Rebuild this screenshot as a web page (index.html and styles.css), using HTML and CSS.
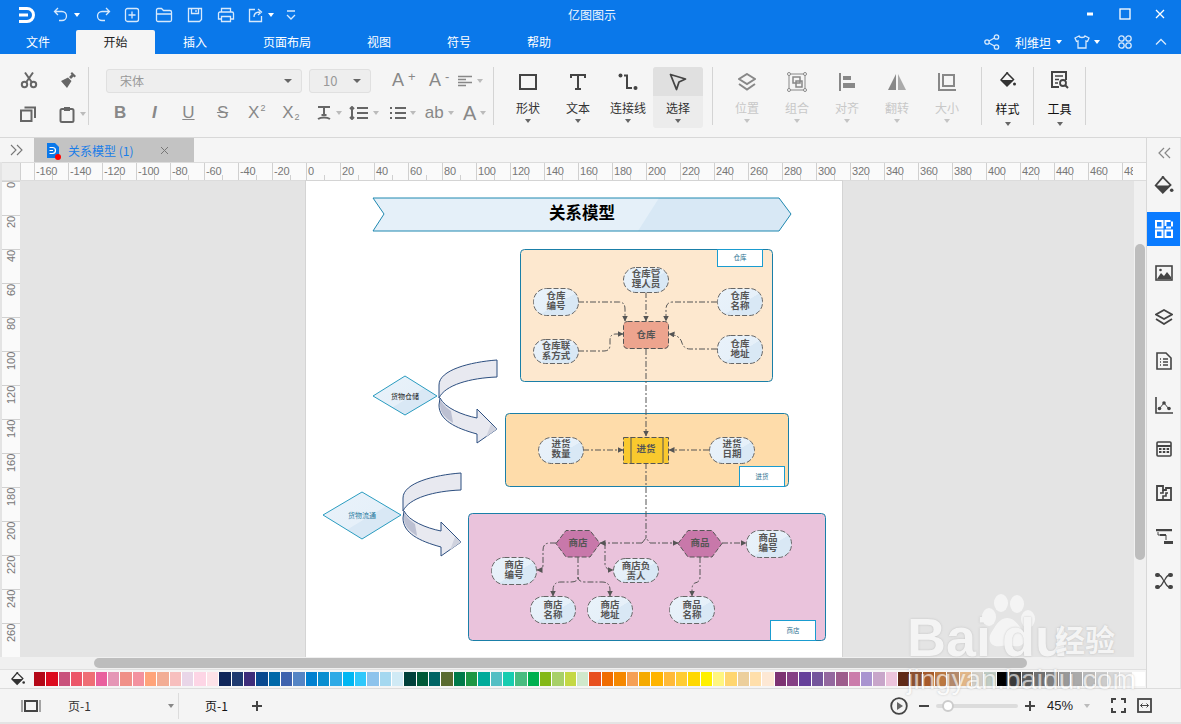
FILE: index.html
```html
<!DOCTYPE html>
<html lang="zh-CN">
<head>
    <meta charset="UTF-8">
    <title>亿图图示</title>
    <link rel="stylesheet" href="styles.css">
</head>
<body>

    <!-- Barra de titulo -->
    <header class="titlebar">
        <div class="tb-left">
            <svg class="logo" width="18" height="16" viewBox="0 0 18 16"><path d="M1 1.5h8a6.5 6.5 0 0 1 0 13H1M1 8h9" fill="none" stroke="#fff" stroke-width="3"/></svg>
            <svg class="qa" style="margin-left:16px" width="18" height="18" viewBox="0 0 18 18"><path d="M6 2L2.500 5.500 6 9M3 5.500h7a4.500 4.500 0 0 1 0 9H7" class="qs"/></svg>
            <i class="caret caret-w"></i>
            <svg class="qa" style="margin-left:14px" width="18" height="18" viewBox="0 0 18 18"><path d="M12 2l3.500 3.500L12 9M15 5.500H8a4.500 4.500 0 0 0 0 9h3" class="qs"/></svg>
            <svg class="qa" style="margin-left:12px" width="16" height="16" viewBox="0 0 16 16"><rect x="1.500" y="1.500" width="13" height="13" rx="2" class="qs"/><path d="M8 4.500v7M4.500 8h7" class="qs"/></svg>
            <svg class="qa" style="margin-left:15px" width="18" height="16" viewBox="0 0 18 16"><path d="M1.500 13V3a1.500 1.500 0 0 1 1.500-1.500h3.500l2 2H15a1.500 1.500 0 0 1 1.500 1.500v8a1.500 1.500 0 0 1-1.500 1.500H3A1.500 1.500 0 0 1 1.500 13zM1.500 7h15" class="qs"/></svg>
            <svg class="qa" style="margin-left:14px" width="16" height="16" viewBox="0 0 16 16"><path d="M1.500 1.500h13v11l-2 2h-11zM4.500 1.500v5h7v-5M9 3v2" class="qs"/></svg>
            <svg class="qa" style="margin-left:14px" width="18" height="16" viewBox="0 0 18 16"><path d="M4.500 5V1.500h9V5M4.500 12H1.500V6.500a1.500 1.500 0 0 1 1.500-1.500h12a1.500 1.500 0 0 1 1.500 1.500V12h-3M4.500 9.500h9v5h-9z" class="qs"/></svg>
            <svg class="qa" style="margin-left:13px" width="16" height="16" viewBox="0 0 16 16"><path d="M13.500 9v5.500h-12v-12H7M6 10c0-3 2-5 6-5M10 2l3.500 3L10 8" class="qs"/></svg>
            <i class="caret caret-w"></i>
            <svg class="qa" style="margin-left:12px" width="10" height="12" viewBox="0 0 10 12"><path d="M1 2h8M1 6l4 4 4-4" class="qs"/></svg>
        </div>
        <div class="tb-title">亿图图示</div>
        <div class="tb-right">
            <svg width="12" height="4" viewBox="0 0 12 4"><path d="M3 2h6" stroke="#fff" stroke-width="3"/></svg>
            <svg width="12" height="12" viewBox="0 0 12 12"><rect x="1" y="1" width="10" height="10" fill="none" stroke="#fff" stroke-width="1.300"/></svg>
            <svg width="12" height="12" viewBox="0 0 12 12"><path d="M2 2l8 8M10 2l-8 8" stroke="#fff" stroke-width="1.300"/></svg>
        </div>
    </header>

    <!-- Menu -->
    <nav class="menubar">
        <ul class="menu-tabs">
            <li class="first">文件</li>
            <li class="active">开始</li>
            <li>插入</li>
            <li>页面布局</li>
            <li>视图</li>
            <li>符号</li>
            <li>帮助</li>
        </ul>
        <div class="menu-right">
            <svg width="16" height="16" viewBox="0 0 16 16"><circle cx="3" cy="8" r="2.200" class="qs"/><circle cx="12.500" cy="3" r="2.200" class="qs"/><circle cx="12.500" cy="13" r="2.200" class="qs"/><path d="M5 7l5.500-3M5 9l5.500 3" class="qs"/></svg>
            <span class="user">利维坦</span>
            <i class="caret caret-w"></i>
            <svg class="shirt" width="16" height="14" viewBox="0 0 16 14"><path d="M5 1L1 3l1.500 3.500L4 6v7h8V6l1.500.5L15 3l-4-2c-.5 2-5.500 2-6 0z" class="qs"/></svg>
            <i class="caret caret-w"></i>
            <svg class="apps" width="14" height="14" viewBox="0 0 14 14"><circle cx="3.500" cy="3.500" r="2.700" class="qs"/><circle cx="10.500" cy="3.500" r="2.700" class="qs"/><circle cx="3.500" cy="10.500" r="2.700" class="qs"/><circle cx="10.500" cy="10.500" r="2.700" class="qs"/></svg>
            <svg class="fold" width="12" height="8" viewBox="0 0 12 8"><path d="M1 6.500L6 1.500l5 5" class="qs"/></svg>
        </div>
    </nav>

    <!-- Cinta de herramientas -->
    <section class="ribbon">
        <div class="rb-group g-clip">
            <div class="clip-row">
                <svg width="18" height="18" viewBox="0 0 18 18"><circle cx="4.500" cy="13.500" r="2.700" class="si"/><circle cx="13.500" cy="13.500" r="2.700" class="si"/><path d="M6 11.500L13 1.500M12 11.500L5 1.500" class="si"/></svg>
                <svg width="20" height="18" viewBox="0 0 20 18"><path d="M13 1l4 4-1.500 1.500-1-1L12 8l-2-2 2.500-2.500-1-1zM9 6.500l3.500 3.500L8 17 2 10l7-3.500z" fill="#666"/></svg>
            </div>
            <div class="clip-row">
                <svg width="16" height="16" viewBox="0 0 16 16"><rect x="1" y="4.500" width="10.500" height="10.500" class="si"/><path d="M4.500 1.500H15v10.500" class="si"/></svg>
                <span class="with-caret">
                    <svg width="16" height="17" viewBox="0 0 16 17"><rect x="1.500" y="3" width="13" height="13" rx="1.500" class="si"/><rect x="5" y="1" width="6" height="4" fill="#666"/></svg>
                    <i class="caret caret-l"></i>
                </span>
            </div>
        </div>

        <div class="rb-group g-font">
            <div class="font-row">
                <div class="select sel-font">宋体<i class="caret"></i></div>
                <div class="select sel-size">10<i class="caret"></i></div>
                <span class="fi fi-a">A<sup>+</sup></span>
                <span class="fi fi-a">A<sup>-</sup></span>
                <span class="fi">
                    <svg width="16" height="12" viewBox="0 0 16 12"><path d="M1 1.500h14M1 4.500h8M1 7.500h14M1 10.500h8" stroke="#888" stroke-width="1.500"/></svg>
                    <i class="caret caret-l"></i>
                </span>
            </div>
            <div class="font-row row-2">
                <span class="fi txt bold">B</span>
                <span class="fi txt ital">I</span>
                <span class="fi txt under">U</span>
                <span class="fi txt strike">S</span>
                <span class="fi txt">X<sup>2</sup></span>
                <span class="fi txt">X<sub>2</sub></span>
                <span class="fi fi-sm">
                    <svg width="16" height="16" viewBox="0 0 16 16"><path d="M2 2h12M8 2v8M5.500 10h5M2 14c3-2 9-2 12 0" class="si"/></svg>
                    <i class="caret caret-l"></i>
                </span>
                <span class="fi fi-md">
                    <svg width="20" height="14" viewBox="0 0 20 14"><path d="M3 1v12M1 3l2-2 2 2M1 11l2 2 2-2M8 2h11M8 7h11M8 12h11" class="si"/></svg>
                    <i class="caret caret-l"></i>
                </span>
                <span class="fi fi-md">
                    <svg width="16" height="14" viewBox="0 0 16 14"><path d="M0 2h2M0 7h2M0 12h2M5 2h11M5 7h11M5 12h11" class="si"/></svg>
                    <i class="caret caret-l"></i>
                </span>
                <span class="fi txt txt-ab">ab<i class="caret caret-l"></i></span>
                <span class="fi txt txt-a">A<i class="caret caret-l"></i></span>
            </div>
        </div>

        <div class="rb-group g-shape">
            <div class="big-btn">
                <div class="big-ic"><svg width="18" height="16" viewBox="0 0 18 16"><rect x="1" y="1" width="16" height="14" fill="none" stroke="#444" stroke-width="2"/></svg></div>
                <span>形状</span><i class="caret"></i>
            </div>
            <div class="big-btn">
                <div class="big-ic"><svg width="16" height="16" viewBox="0 0 16 16"><path d="M1 4V1h14v3M8 1v14M5 15h6" fill="none" stroke="#444" stroke-width="2"/></svg></div>
                <span>文本</span><i class="caret"></i>
            </div>
            <div class="big-btn">
                <div class="big-ic"><svg width="20" height="18" viewBox="0 0 20 18"><circle cx="2.500" cy="2.500" r="2" fill="#444"/><circle cx="17.500" cy="15" r="2" fill="#444"/><path d="M6 2.500h3v12.500h5" fill="none" stroke="#444" stroke-width="2"/></svg></div>
                <span>连接线</span><i class="caret"></i>
            </div>
            <div class="big-btn selected">
                <div class="big-ic"><svg width="18" height="18" viewBox="0 0 18 18"><path d="M1.500 1.500L16.500 6 10 9l-2.500 7.500z" fill="none" stroke="#444" stroke-width="1.800" stroke-linejoin="round"/></svg></div>
                <span>选择</span><i class="caret"></i>
            </div>
        </div>

        <div class="rb-group g-arrange">
            <div class="big-btn off">
                <div class="big-ic"><svg width="18" height="18" viewBox="0 0 18 18"><path d="M9 1l8 5-8 5-8-5zM1 11l8 5.500L17 11" fill="none" stroke="#888" stroke-width="2"/></svg></div>
                <span>位置</span><i class="caret"></i>
            </div>
            <div class="big-btn off">
                <div class="big-ic"><svg width="20" height="20" viewBox="0 0 20 20"><rect x="2" y="2" width="16" height="16" fill="none" stroke="#888" stroke-width="1"/><rect x="6" y="5" width="7" height="6" fill="none" stroke="#888" stroke-width="1.500"/><rect x="9" y="9" width="6" height="6" fill="none" stroke="#888" stroke-width="1.500"/><circle cx="2" cy="2" r="1.500" fill="#fff" stroke="#888"/><circle cx="18" cy="2" r="1.500" fill="#fff" stroke="#888"/><circle cx="2" cy="18" r="1.500" fill="#fff" stroke="#888"/><circle cx="18" cy="18" r="1.500" fill="#fff" stroke="#888"/></svg></div>
                <span>组合</span><i class="caret"></i>
            </div>
            <div class="big-btn off">
                <div class="big-ic"><svg width="16" height="18" viewBox="0 0 16 18"><path d="M1 0v18" stroke="#888" stroke-width="2"/><rect x="4" y="3" width="8" height="4" fill="#888"/><rect x="4" y="10" width="12" height="5" fill="#888"/></svg></div>
                <span>对齐</span><i class="caret"></i>
            </div>
            <div class="big-btn off">
                <div class="big-ic"><svg width="18" height="18" viewBox="0 0 18 18"><path d="M8 1v16H0z" fill="#888"/><path d="M10 1v16h8z" fill="#aaa"/></svg></div>
                <span>翻转</span><i class="caret"></i>
            </div>
            <div class="big-btn off">
                <div class="big-ic"><svg width="18" height="18" viewBox="0 0 18 18"><path d="M1 0v17h17" fill="none" stroke="#888" stroke-width="2"/><rect x="5" y="2" width="11" height="11" fill="none" stroke="#888" stroke-width="2"/></svg></div>
                <span>大小</span><i class="caret"></i>
            </div>
        </div>

        <div class="rb-group g-one">
            <div class="big-btn tall">
                <div class="big-ic"><svg width="16" height="16" viewBox="0 0 16 16"><path d="M6.500 0L8 1.500M7 1l6.500 6.500L7 14 1 8z" fill="none" stroke="#333" stroke-width="1.500"/><path d="M1 8h12.500L7 14z" fill="#333"/><circle cx="14.500" cy="12" r="1.500" fill="#333"/></svg></div>
                <span>样式</span><i class="caret"></i>
            </div>
        </div>
        <div class="rb-group g-one">
            <div class="big-btn tall">
                <div class="big-ic"><svg width="18" height="18" viewBox="0 0 18 18"><path d="M8 16H1V1h14v8" fill="none" stroke="#444" stroke-width="2"/><path d="M4 5h8M4 8.500h4M4 12h3" stroke="#444" stroke-width="1.500"/><circle cx="12" cy="12" r="3" fill="none" stroke="#444" stroke-width="1.800"/><path d="M14 14l3 3" stroke="#444" stroke-width="2"/></svg></div>
                <span>工具</span><i class="caret"></i>
            </div>
        </div>
    </section>

    <div class="workspace">
        <div class="work-main">
            <div class="doc-tabs">
                <div class="panel-toggle">
                    <svg width="14" height="12" viewBox="0 0 14 12"><path d="M1 1l5 5-5 5M7 1l5 5-5 5" fill="none" stroke="#777" stroke-width="1.100"/></svg>
                </div>
                <div class="doc-tab">
                    <span class="doc-icon">
                        <svg width="12" height="15" viewBox="0 0 12 15"><path d="M0 0h8l4 4v11H0z" fill="#0a78ea"/><path d="M2.500 4.500h3a3 3 0 0 1 0 6h-3M2.500 7.500h3.500" fill="none" stroke="#fff" stroke-width="1.200"/></svg>
                        <i class="red-dot"></i>
                    </span>
                    <span class="doc-name">关系模型 (1)</span>
                    <svg class="doc-close" width="9" height="9" viewBox="0 0 9 9"><path d="M1 1l7 7M8 1L1 8" stroke="#777"/></svg>
                </div>
            </div>

            <div class="ruler-h">
                <div class="ruler-corner"></div>
                <div class="rh-first"></div>
                <div class="rh">-160</div><div class="rh">-140</div><div class="rh">-120</div><div class="rh">-100</div><div class="rh">-80</div><div class="rh">-60</div><div class="rh">-40</div><div class="rh">-20</div>
                <div class="rh">0</div><div class="rh">20</div><div class="rh">40</div><div class="rh">60</div><div class="rh">80</div><div class="rh">100</div><div class="rh">120</div><div class="rh">140</div><div class="rh">160</div><div class="rh">180</div><div class="rh">200</div><div class="rh">220</div><div class="rh">240</div><div class="rh">260</div><div class="rh">280</div><div class="rh">300</div><div class="rh">320</div><div class="rh">340</div><div class="rh">360</div><div class="rh">380</div><div class="rh">400</div><div class="rh">420</div><div class="rh">440</div><div class="rh">460</div><div class="rh rh-last">480</div>
            </div>

            <div class="canvas-row">
                <div class="ruler-v">
                    <div class="rv"><span>0</span></div><div class="rv"><span>20</span></div><div class="rv"><span>40</span></div><div class="rv"><span>60</span></div><div class="rv"><span>80</span></div><div class="rv"><span>100</span></div><div class="rv"><span>120</span></div><div class="rv"><span>140</span></div><div class="rv"><span>160</span></div><div class="rv"><span>180</span></div><div class="rv"><span>200</span></div><div class="rv"><span>220</span></div><div class="rv"><span>240</span></div><div class="rv"><span>260</span></div>
                </div>
                <div class="canvas">
                    <svg class="page" width="536" height="476" viewBox="306 181 536 476">
                        <defs>
                            <linearGradient id="nodeFill" x1="0" y1="0" x2="1" y2="1">
                                <stop offset="0" stop-color="#e9f2fa"/>
                                <stop offset="0.55" stop-color="#e6f0f9"/>
                                <stop offset="0.56" stop-color="#d9e8f5"/>
                                <stop offset="1" stop-color="#d9e8f5"/>
                            </linearGradient>
                            <marker id="arr" viewBox="0 0 6 6" refX="5.500" refY="3" markerWidth="6" markerHeight="6" orient="auto" markerUnits="userSpaceOnUse">
                                <path d="M0 0L6 3 0 6z" fill="#555"/>
                            </marker>
                            <g id="bigArrow">
                                <path d="M497 360C470 362 439 370 439 385V398C445 385 470 378 497 377z" fill="#e8e9f0" stroke="#2d4f80"/>
                                <path d="M440 398C445 408 462 415 477 418V409L497 429 477 443V434C455 428 439 420 439 405z" fill="#e8e9f0" stroke="#2d4f80"/>
                                <path d="M440 399C442 404 447 408 451 411 452 417 453 421 453 423 444 417 440 412 440 405z" fill="#bcc0d2"/>
                                <path d="M497 429L491 424 486 437z" fill="#cfd2de"/>
                            </g>
                        </defs>

                        <!-- titulo -->
                        <polygon points="373,198 779,198 791,214 779,231 373,231 384,214" fill="#e5f0f9"/>
                        <polygon points="659,198 779,198 791,214 779,231 638,231" fill="#d8e8f5"/>
                        <polygon points="373,198 779,198 791,214 779,231 373,231 384,214" fill="none" stroke="#1f88b0"/>
                        <text x="582" y="219" class="t-title">关系模型</text>

                        <!-- tarjetas -->
                        <rect x="520.500" y="249.500" width="252" height="132" rx="4" fill="#fde8cf" stroke="#1a7fa8"/>
                        <rect x="717.500" y="249.500" width="45" height="17" fill="#fff" stroke="#1a9cd0"/>
                        <text x="740" y="260" class="t-lab">仓库</text>

                        <rect x="505.500" y="413.500" width="283" height="73" rx="4" fill="#fedcaa" stroke="#1a7fa8"/>
                        <rect x="739.500" y="466.500" width="45" height="20" fill="#fff" stroke="#1a9cd0"/>
                        <text x="762" y="479" class="t-lab">进货</text>

                        <rect x="468.500" y="513.500" width="357" height="127" rx="4" fill="#eac3dc" stroke="#1a7fa8"/>
                        <rect x="770.500" y="620.500" width="45" height="20" fill="#fff" stroke="#1a9cd0"/>
                        <text x="793" y="633" class="t-lab">商店</text>

                        <!-- conectores -->
                        <g class="conn">
                            <path d="M578 302H619Q625 302 625 309V321" marker-end="url(#arr)"/>
                            <path d="M646 292V321" marker-end="url(#arr)"/>
                            <path d="M717 302H673Q666 302 666 309V321" marker-end="url(#arr)"/>
                            <path d="M578 351H604Q610 351 610 345V340Q610 334 616 334H623" marker-end="url(#arr)"/>
                            <path d="M717 349H690Q684 349 682 343 680 335 669 334" marker-end="url(#arr)"/>
                            <path d="M646 349V436" marker-end="url(#arr)"/>
                            <path d="M583 450H623" marker-end="url(#arr)"/>
                            <path d="M709 450H669" marker-end="url(#arr)"/>
                            <path d="M646 463V538"/>
                            <path d="M642 543L646 538 650 543"/>
                            <path d="M642 543H600" marker-end="url(#arr)"/>
                            <path d="M650 543H678" marker-end="url(#arr)"/>
                            <path d="M722 543H746" marker-end="url(#arr)"/>
                            <path d="M556 543H550Q543 543 543 550V565Q543 570 537 570" marker-end="url(#arr)"/>
                            <path d="M605 543V564Q605 570 613 570" marker-end="url(#arr)"/>
                            <path d="M578 557V577Q578 582 571 582H561Q553 582 553 590V596" marker-end="url(#arr)"/>
                            <path d="M578 577Q578 582 585 582H602Q610 582 610 590V596" marker-end="url(#arr)"/>
                            <path d="M700 557V577Q700 582 695 583 692 584 692 590V596" marker-end="url(#arr)"/>
                        </g>

                        <!-- nodos -->
                        <g class="node">
                            <rect x="623.500" y="267.500" width="45" height="25" rx="12.500"/>
                            <rect x="533.500" y="288.500" width="45" height="27" rx="13"/>
                            <rect x="717.500" y="288.500" width="45" height="27" rx="13"/>
                            <rect x="533.500" y="339.500" width="45" height="24" rx="12"/>
                            <rect x="717.500" y="335.500" width="45" height="28" rx="13"/>
                            <rect x="538.500" y="437.500" width="45" height="26" rx="13"/>
                            <rect x="709.500" y="437.500" width="45" height="26" rx="13"/>
                            <rect x="746.500" y="530.500" width="45" height="27" rx="13"/>
                            <rect x="491.500" y="557.500" width="45" height="27" rx="13"/>
                            <rect x="613.500" y="558.500" width="45" height="24" rx="12"/>
                            <rect x="530.500" y="596.500" width="45" height="27" rx="13"/>
                            <rect x="587.500" y="596.500" width="45" height="27" rx="13"/>
                            <rect x="669.500" y="596.500" width="45" height="27" rx="13"/>
                        </g>
                        <rect x="623.500" y="321.500" width="45" height="27" rx="4" fill="#eda48e" class="dash"/>
                        <rect x="623.500" y="437.500" width="45" height="26" fill="#f9c92e" class="dash"/>
                        <path d="M631 437V463M663 437V463" stroke="#555"/>
                        <polygon points="556,543.500 566,530.500 590,530.500 600,543.500 590,557 566,557" fill="#c878aa" class="dash"/>
                        <polygon points="678,543.500 688,530.500 712,530.500 722,543.500 712,557 688,557" fill="#c878aa" class="dash"/>

                        <!-- textos -->
                        <g class="t-node">
                            <text x="646" y="277">仓库管</text><text x="646" y="287">理人员</text>
                            <text x="556" y="299">仓库</text><text x="556" y="309">编号</text>
                            <text x="740" y="299">仓库</text><text x="740" y="309">名称</text>
                            <text x="556" y="349">仓库联</text><text x="556" y="359">系方式</text>
                            <text x="740" y="347">仓库</text><text x="740" y="357">地址</text>
                            <text x="646" y="338">仓库</text>
                            <text x="561" y="447">进货</text><text x="561" y="457">数量</text>
                            <text x="732" y="447">进货</text><text x="732" y="457">日期</text>
                            <text x="646" y="452">进货</text>
                            <text x="578" y="546">商店</text>
                            <text x="700" y="546">商品</text>
                            <text x="768" y="541">商品</text><text x="768" y="551">编号</text>
                            <text x="514" y="568">商店</text><text x="514" y="578">编号</text>
                            <text x="636" y="569">商店负</text><text x="636" y="579">责人</text>
                            <text x="553" y="608">商店</text><text x="553" y="618">名称</text>
                            <text x="610" y="608">商店</text><text x="610" y="618">地址</text>
                            <text x="692" y="608">商品</text><text x="692" y="618">名称</text>
                        </g>

                        <!-- rombos y flechas -->
                        <polygon points="373,396 405,376 437,396 405,415" fill="url(#nodeFill)" stroke="#2a9cc0"/>
                        <text x="405" y="398.500" class="t-dia">货物仓储</text>
                        <polygon points="323,515 362,492 401,515 362,539" fill="url(#nodeFill)" stroke="#2a9cc0"/>
                        <text x="362" y="518" class="t-dia blue">货物流通</text>
                        <use href="#bigArrow"/>
                        <use href="#bigArrow" x="-36" y="113"/>
                    </svg>
                </div>
                <div class="vscroll"><div class="vthumb"></div></div>
            </div>

            <div class="hscroll"><div class="hthumb"></div></div>

            <div class="palette">
                <svg class="pal-fill" width="14" height="14" viewBox="0 0 16 16"><path d="M6.500 0L8 1.500M7 1l6.500 6.500L7 14 1 8z" fill="none" stroke="#333" stroke-width="1.500"/><path d="M1 8h12.500L7 14z" fill="#333"/><circle cx="14.500" cy="12" r="1.500" fill="#333"/></svg>
                <div class="swatches">
                    <i style="background:#b40717"></i><i style="background:#dc0a1e"></i><i style="background:#c9527c"></i><i style="background:#ec5669"></i><i style="background:#ef6e75"></i><i style="background:#e9609e"></i><i style="background:#e596b6"></i><i style="background:#f09088"></i><i style="background:#f3929f"></i><i style="background:#ffa47a"></i><i style="background:#f2ad95"></i><i style="background:#f7bfbe"></i><i style="background:#e9d6e8"></i><i style="background:#fdd5e5"></i><i style="background:#fde2e8"></i>
                    <i style="background:#10265a"></i><i style="background:#1f3a70"></i><i style="background:#3e2d7a"></i><i style="background:#0a4a90"></i><i style="background:#0068a8"></i><i style="background:#3f63ae"></i><i style="background:#5585c5"></i><i style="background:#0080d0"></i><i style="background:#088ed0"></i><i style="background:#2eaae6"></i><i style="background:#00b7f3"></i><i style="background:#2fc8fb"></i><i style="background:#8dc3ec"></i><i style="background:#a5d8f0"></i><i style="background:#d0eaf5"></i>
                    <i style="background:#00403a"></i><i style="background:#005a38"></i><i style="background:#006464"></i><i style="background:#5a6b30"></i><i style="background:#007a4a"></i><i style="background:#1e9644"></i><i style="background:#00ab9a"></i><i style="background:#54bfc4"></i><i style="background:#18cdb0"></i><i style="background:#48bc80"></i><i style="background:#00b050"></i><i style="background:#84b818"></i><i style="background:#a8d068"></i><i style="background:#c4d844"></i><i style="background:#d0e8cc"></i>
                    <i style="background:#e85020"></i><i style="background:#f06c00"></i><i style="background:#f58800"></i><i style="background:#f5a055"></i><i style="background:#f5aa00"></i><i style="background:#ffb400"></i><i style="background:#ffba38"></i><i style="background:#ffcc33"></i><i style="background:#ffd800"></i><i style="background:#fff000"></i><i style="background:#fff580"></i><i style="background:#ffd670"></i><i style="background:#eccf9c"></i><i style="background:#ffdfab"></i><i style="background:#fde8d4"></i>
                    <i style="background:#7c3272"></i><i style="background:#843f84"></i><i style="background:#66409a"></i><i style="background:#74559c"></i><i style="background:#94689f"></i><i style="background:#9d5c8c"></i><i style="background:#cb7cab"></i><i style="background:#a994d0"></i><i style="background:#c8a6ca"></i><i style="background:#ecc4dc"></i>
                    <i style="background:#5f2a18"></i><i style="background:#8c5030"></i><i style="background:#a85a2a"></i><i style="background:#bc7840"></i><i style="background:#b48a6c"></i><i style="background:#e4b888"></i><i style="background:#d4d0c8"></i><i style="background:#c0ccc4"></i><i style="background:#000000"></i><i style="background:#3a3a3a"></i><i style="background:#5a5a5a"></i><i style="background:#707070"></i><i style="background:#808080"></i><i style="background:#999999"></i><i style="background:#aaaaaa"></i><i style="background:#bbbbbb"></i><i style="background:#cccccc"></i><i style="background:#d8d8d8"></i><i style="background:#e8e8e8"></i><i style="background:#ffffff"></i>
                </div>
            </div>
        </div>

        <aside class="sidepanel">
            <div class="side-fold"><svg width="14" height="12" viewBox="0 0 14 12"><path d="M7 1L2 6l5 5M13 1L8 6l5 5" fill="none" stroke="#888" stroke-width="1.200"/></svg></div>
            <div class="side-item"><svg width="20" height="19" viewBox="0 0 16 16"><path d="M6.500 0L8 1.500M7 1l6.500 6.500L7 14 1 8z" fill="none" stroke="#444" stroke-width="1.500"/><path d="M1 8h12.500L7 14z" fill="#444"/><circle cx="14.500" cy="12" r="1.500" fill="#444"/></svg></div>
            <div class="side-item on"><svg width="18" height="18" viewBox="0 0 18 18"><g fill="none" stroke="#fff" stroke-width="2"><rect x="1" y="1" width="6.500" height="6.500"/><path d="M10.500 1h6.500v6.500h-6.500z" stroke-dasharray="5 2"/><rect x="1" y="10.500" width="6.500" height="6.500"/><rect x="10.500" y="10.500" width="6.500" height="6.500"/></g></svg></div>
            <div class="side-item"><svg width="18" height="16" viewBox="0 0 18 16"><rect x="1" y="1" width="16" height="14" fill="none" stroke="#444" stroke-width="1.600"/><path d="M2 14l4-6 3 3 3-4 4 5v2z" fill="#444"/><circle cx="5.500" cy="5" r="1.300" fill="#444"/></svg></div>
            <div class="side-item"><svg width="18" height="16" viewBox="0 0 18 16"><path d="M9 1l8 4.500-8 4.500-8-4.500zM1 10l8 5 8-5" fill="none" stroke="#444" stroke-width="1.800"/></svg></div>
            <div class="side-item"><svg width="16" height="18" viewBox="0 0 16 18"><path d="M1 1h9l5 5v11H1z" fill="none" stroke="#444" stroke-width="1.600"/><path d="M4 7h1M7 7h5M4 10h1M7 10h5M4 13h1M7 13h5" stroke="#444" stroke-width="1.500"/></svg></div>
            <div class="side-item"><svg width="18" height="17" viewBox="0 0 18 17"><path d="M1 0v16h17" fill="none" stroke="#444" stroke-width="1.600"/><path d="M4 12l5-6 5 6" fill="none" stroke="#444"/><circle cx="4.500" cy="11.500" r="1.800" fill="#444"/><circle cx="9" cy="6" r="1.800" fill="#444"/><circle cx="14" cy="11.500" r="1.800" fill="#444"/></svg></div>
            <div class="side-item"><svg width="16" height="16" viewBox="0 0 16 16"><rect x="1" y="1" width="14" height="14" rx="1" fill="none" stroke="#444" stroke-width="1.600"/><path d="M1 5h14" stroke="#444" stroke-width="2"/><path d="M3 8h2.500M6.800 8h2.500M10.600 8h2.500M3 11h2.500M6.800 11h2.500M10.600 11h2.500" stroke="#444" stroke-width="2"/></svg></div>
            <div class="side-item"><svg width="16" height="16" viewBox="0 0 16 16"><path d="M1 1h6v4h3V3h5v12H1z" fill="none" stroke="#444" stroke-width="1.800"/><path d="M7 5v3H4M7 15v-4h3V8h2" fill="none" stroke="#444" stroke-width="1.600"/></svg></div>
            <div class="side-item"><svg width="18" height="16" viewBox="0 0 18 16"><path d="M1 1h16" stroke="#444" stroke-width="2.500"/><path d="M3 3v3h8M11 6v5" fill="none" stroke="#444"/><rect x="5" y="5" width="6" height="2" fill="#444"/><rect x="9" y="12" width="9" height="3" fill="#444"/></svg></div>
            <div class="side-item"><svg width="18" height="16" viewBox="0 0 18 16"><path d="M3 2c4 0 4 4 6 6s2 6 6 6M15 2c-4 0-4 4-6 6s-2 6-6 6" fill="none" stroke="#444" stroke-width="1.300"/><rect x="0" y="0" width="5" height="4" rx="2" fill="#444"/><rect x="13" y="0" width="5" height="4" rx="2" fill="#444"/><rect x="0" y="12" width="5" height="4" rx="2" fill="#444"/><rect x="13" y="12" width="5" height="4" rx="2" fill="#444"/></svg></div>
        </aside>
    </div>

    <!-- Barra de estado -->
    <footer class="statusbar">
        <div class="st-left">
            <svg width="20" height="12" viewBox="0 0 20 12"><path d="M1 0v12M19 0v12" stroke="#555"/><rect x="4" y="1" width="12" height="10" fill="none" stroke="#444" stroke-width="2"/></svg>
            <div class="page-select">页-1<i class="caret"></i></div>
            <div class="page-tab">页-1</div>
            <svg width="10" height="10" viewBox="0 0 10 10"><path d="M5 0v10M0 5h10" stroke="#444" stroke-width="2"/></svg>
        </div>
        <div class="st-right">
            <svg width="18" height="18" viewBox="0 0 18 18"><circle cx="9" cy="9" r="7.800" fill="none" stroke="#444" stroke-width="1.800"/><path d="M7 5l6 4-6 4z" fill="#666"/></svg>
            <svg class="z-minus" width="10" height="2" viewBox="0 0 10 2"><path d="M0 1h10" stroke="#444" stroke-width="2"/></svg>
            <div class="slider"><i class="slider-thumb"></i></div>
            <svg class="z-plus" width="10" height="10" viewBox="0 0 10 10"><path d="M5 0v10M0 5h10" stroke="#444" stroke-width="2"/></svg>
            <span class="zoom-val">45%</span>
            <i class="caret caret-l"></i>
            <svg class="z-full" width="15" height="15" viewBox="0 0 15 15"><path d="M1 5V1h4M10 1h4v4M14 10v4h-4M5 14H1v-4" fill="none" stroke="#444" stroke-width="2"/></svg>
            <svg class="z-fit" width="15" height="15" viewBox="0 0 15 15"><rect x="1" y="1" width="13" height="13" fill="none" stroke="#444" stroke-width="1.800"/><path d="M3.500 7.500h8M5.500 5.500l-2 2 2 2M9.500 5.500l2 2-2 2" fill="none" stroke="#444"/></svg>
        </div>
    </footer>

    <!-- Marca de agua -->
    <div class="watermark">
        <span class="wm-bai">Bai</span>
        <svg class="wm-paw" width="64" height="60" viewBox="0 0 64 60"><g fill="#fff"><ellipse cx="15" cy="24" rx="7" ry="9"/><ellipse cx="27" cy="10" rx="7" ry="9"/><ellipse cx="43" cy="11" rx="7" ry="9"/><ellipse cx="54" cy="26" rx="7" ry="9"/><path d="M33 25c8 0 13 9 17 15 4 8-2 15-10 13-5-1-9-1-13 0-9 2-14-5-10-13 4-6 8-15 16-15z"/></g></svg>
        <span class="wm-du">du</span>
        <span class="wm-cn">经验</span>
        <span class="wm-url">jingyan.baidu.com</span>
    </div>

</body>
</html>
```

FILE: styles.css
```css
body {
    position: relative;
    width: 1181px;
    height: 724px;
    margin: 0;
    overflow: hidden;
    background-color: #e4e4e4;
    font-family: "Noto Sans CJK SC", "Liberation Sans", sans-serif;
    font-size: 12px;
    color: #333;
}
svg {
    display: block;
    flex: none;
}
i {
    font-style: normal;
}
.caret {
    display: inline-block;
    width: 0;
    height: 0;
    border-left: 4px solid transparent;
    border-right: 4px solid transparent;
    border-top: 4px solid #666;
}
.caret-w {
    border-left-width: 3.5px;
    border-right-width: 3.5px;
    border-top-color: #fff;
}
.caret-l {
    border-left-width: 3.5px;
    border-right-width: 3.5px;
    border-top-color: #bbb;
}
.qs {
    fill: none;
    stroke: #d7e9fc;
    stroke-width: 1.300;
}
.si {
    fill: none;
    stroke: #666;
    stroke-width: 2;
}

/* Titulo */
.titlebar {
    display: flex;
    align-items: center;
    height: 30px;
    background-color: #0a78ea;
    color: #fff;
}
.tb-left {
    flex: 1;
    display: flex;
    align-items: center;
    padding-left: 18px;
    min-width: 0;
}
.tb-left .caret-w {
    margin-left: 4px;
}
.tb-title {
    line-height: 30px;
    opacity: 0.95;
}
.tb-right {
    flex: 1;
    display: flex;
    align-items: center;
    justify-content: flex-end;
    gap: 23px;
    padding-right: 15px;
    padding-bottom: 3px;
}

/* Menu */
.menubar {
    display: flex;
    justify-content: space-between;
    height: 24px;
    background-color: #0a78ea;
}
.menu-tabs {
    display: flex;
    list-style: none;
    margin: 0;
    padding: 0;
}
.menu-tabs li {
    padding: 0 28px;
    line-height: 24px;
    color: #fff;
}
.menu-tabs li.first {
    padding: 0 26px;
}
.menu-tabs li.active {
    width: 79px;
    box-sizing: border-box;
    padding: 0;
    text-align: center;
    color: #222;
    background-color: #f5f5f5;
    border-radius: 2px 2px 0 0;
}
.menu-right {
    display: flex;
    align-items: center;
    padding-right: 15px;
    color: #fff;
}
.user {
    margin-left: 15px;
    margin-right: 5px;
}
.shirt {
    margin-left: 12px;
    margin-right: 4px;
}
.apps {
    margin-left: 18px;
}
.fold {
    margin-left: 23px;
    margin-right: -1px;
}

/* Cinta */
.ribbon {
    display: flex;
    height: 83px;
    background-color: #f5f5f5;
    border-bottom: 1px solid #d8d8d8;
}
.rb-group {
    position: relative;
    display: flex;
    height: 58px;
    margin-top: 13px;
    box-sizing: content-box;
    border-right: 1px solid #d4d4d4;
}
.g-clip {
    flex-direction: column;
    justify-content: space-between;
    width: 88px;
    padding-top: 2px;
    height: 56px;
}
.clip-row {
    display: flex;
    align-items: center;
    height: 22px;
    padding-left: 20px;
    gap: 21px;
}
.with-caret {
    display: flex;
    align-items: center;
    gap: 5px;
    margin-left: 2px;
}
.g-font {
    flex-direction: column;
    width: 390px;
    padding-left: 14px;
}
.font-row {
    display: flex;
    align-items: center;
    height: 26px;
    margin-top: 1px;
}
.row-2 {
    margin-top: 8px;
    height: 24px;
}
.select {
    display: flex;
    align-items: center;
    justify-content: space-between;
    height: 24px;
    box-sizing: border-box;
    padding: 0 9px 0 13px;
    background-color: #eeeeee;
    border: 1px solid #e0e0e0;
    border-radius: 3px;
    color: #999;
}
.sel-font {
    width: 196px;
    margin-left: 3px;
}
.sel-size {
    width: 62px;
    margin-left: 7px;
    margin-right: 15px;
    font-size: 13px;
}
.fi {
    display: flex;
    align-items: center;
    gap: 4px;
    width: 35.500px;
    color: #888;
    font-family: "Liberation Sans", sans-serif;
}
.fi-a {
    font-size: 18px;
    justify-content: center;
}
.fi-a sup {
    font-size: 13px;
    margin-top: -8px;
    line-height: 1;
}
.txt {
    justify-content: center;
    font-size: 17px;
}
.txt sup, .txt sub {
    font-size: 9px;
    line-height: 1;
}
.txt sup {
    margin-top: -9px;
    margin-left: -3px;
}
.txt sub {
    margin-top: 9px;
    margin-left: -3px;
}
.bold {
    font-weight: bold;
}
.ital {
    font-style: italic;
    font-weight: bold;
}
.under {
    text-decoration: underline;
}
.strike {
    text-decoration: line-through;
}
.fi-sm, .fi-md {
    justify-content: center;
}
.fi-sm {
    width: 32px;
    margin-left: 6px;
}
.fi-md {
    width: 40px;
}
.txt-ab {
    width: 36px;
}
.txt-a {
    width: 38px;
    font-size: 20px;
}
.g-shape {
    width: 209px;
    padding-left: 9px;
}
.g-arrange {
    width: 259px;
    padding-left: 9px;
}
.g-one {
    width: 51px;
}
.big-btn {
    display: flex;
    flex-direction: column;
    align-items: center;
    width: 50px;
    height: 61px;
    margin-top: 0;
    border-radius: 3px;
}
.big-ic {
    display: flex;
    align-items: center;
    justify-content: center;
    flex: none;
    width: 100%;
    height: 29px;
    border-radius: 3px 3px 0 0;
}
.big-btn span {
    line-height: 23px;
    color: #333;
}
.big-btn .caret {
    border-left-width: 3.5px;
    border-right-width: 3.5px;
    margin-top: 0;
}
.big-btn.selected {
    background-color: #ececec;
}
.big-btn.selected .big-ic {
    background-color: #e0e0e0;
}
.big-btn.off span {
    color: #c8c8c8;
}
.big-btn.off .caret {
    border-top-color: #c4c4c4;
}
.big-btn.tall {
    width: 51px;
}
.big-btn.tall .big-ic {
    height: 26px;
    margin-bottom: 4px;
}
.big-btn.tall span {
    color: #111;
}
.big-btn.tall .caret {
    margin-top: 2px;
}

/* Area de trabajo */
.workspace {
    display: flex;
    height: 550px;
}
.work-main {
    display: flex;
    flex-direction: column;
    width: 1146px;
}
.doc-tabs {
    display: flex;
    height: 24px;
    background-color: #f5f5f5;
}
.panel-toggle {
    display: flex;
    align-items: center;
    justify-content: center;
    width: 34px;
}
.doc-tab {
    display: flex;
    align-items: center;
    width: 160px;
    background-color: #c3c3c3;
}
.doc-icon {
    position: relative;
    margin-left: 13px;
    margin-right: 9px;
}
.red-dot {
    position: absolute;
    right: -2px;
    bottom: -2px;
    width: 6px;
    height: 6px;
    border-radius: 50%;
    background-color: #f00;
}
.doc-name {
    color: #1a7de8;
    width: 90px;
    white-space: nowrap;
}
.doc-close {
    margin-left: 2px;
}

/* Reglas */
.ruler-h {
    display: flex;
    height: 18px;
    margin-left: 2px;
    margin-bottom: 1px;
    overflow: hidden;
    background-color: #fafafa;
    border-top: 1px solid #dcdcdc;
    border-bottom: 1px solid #dcdcdc;
    box-sizing: border-box;
    height: 19px;
    margin-bottom: 0;
}
.ruler-corner {
    flex: none;
    width: 18px;
    background-color: #eeeeee;
}
.rh-first {
    flex: none;
    width: 14px;
    border-left: 1px solid #d0d0d0;
    box-sizing: border-box;
}
.rh {
    position: relative;
    flex: none;
    width: 34px;
    box-sizing: border-box;
    padding-left: 1px;
    border-left: 1px solid #d0d0d0;
    font: 11px/16px "Liberation Sans", sans-serif;
    letter-spacing: -0.2px;
    color: #777;
}
.rh::after {
    content: "";
    position: absolute;
    left: 17px;
    bottom: 0;
    width: 1px;
    height: 5px;
    background-color: #d0d0d0;
}
.rh-last {
    width: 11px;
    overflow: hidden;
}
.canvas-row {
    display: flex;
    height: 476px;
}
.ruler-v {
    flex: none;
    width: 18px;
    margin-left: 2px;
    background-color: #fafafa;
}
.rv {
    display: flex;
    justify-content: center;
    height: 34px;
    box-sizing: border-box;
    border-top: 1px solid #d0d0d0;
    font: 11px/16px "Liberation Sans", sans-serif;
    color: #777;
}
.rv span {
    writing-mode: vertical-rl;
    transform: rotate(180deg);
    height: 22px;
    text-align: right;
}
.canvas {
    flex: none;
    width: 1114px;
    background-color: #e4e4e4;
}
.page {
    margin-left: 286px;
    background-color: #fff;
    box-shadow: 0 0 0 1px #d4d4d4;
}
.vscroll {
    flex: none;
    width: 12px;
    background-color: #f0f0f0;
}
.vthumb {
    width: 10px;
    height: 316px;
    margin: 63px 0 0 1px;
    border-radius: 5px;
    background-color: #bdbdbd;
}
.hscroll {
    height: 13px;
    box-sizing: border-box;
    padding: 1px 0 1px 0;
    background-color: #f0f0f0;
    border-bottom: 1px solid #e0e0e0;
}
.hthumb {
    width: 933px;
    height: 10px;
    margin-left: 94px;
    border-radius: 5px;
    background-color: #bdbdbd;
}

/* Paleta */
.palette {
    display: flex;
    align-items: center;
    height: 18px;
    background-color: #f5f5f5;
}
.pal-fill {
    margin-left: 11px;
    margin-right: 9px;
}
.swatches {
    display: flex;
    height: 14px;
}
.swatches i {
    flex: none;
    width: 12.356px;
    box-sizing: border-box;
    border-right: 1px solid #fff;
}

/* Panel derecho */
.sidepanel {
    flex: none;
    width: 33px;
    background-color: #f5f5f5;
    border-left: 1px solid #d8d8d8;
}
.side-fold {
    display: flex;
    align-items: center;
    justify-content: center;
    height: 30px;
}
.side-item {
    display: flex;
    align-items: center;
    justify-content: center;
    height: 34px;
    margin-bottom: 10px;
}
.side-item.on {
    background-color: #0a7bff;
}

/* Estado */
.statusbar {
    display: flex;
    justify-content: space-between;
    height: 34px;
    background-color: #f4f4f4;
    border-top: 1px solid #dcdcdc;
    box-sizing: border-box;
    margin-bottom: 2px;
}
.st-left, .st-right {
    display: flex;
    align-items: center;
}
.st-left {
    padding-left: 21px;
}
.page-select {
    display: flex;
    align-items: center;
    justify-content: space-between;
    width: 106px;
    height: 26px;
    margin-left: 27px;
    padding-right: 4px;
    border-right: 1px solid #dcdcdc;
    color: #333;
}
.page-select .caret {
    border-left-width: 3.5px;
    border-right-width: 3.5px;
    border-top-color: #888;
}
.page-tab {
    margin-left: 26px;
    color: #111;
    width: 47px;
}
.st-right {
    padding-right: 29px;
}
.z-minus {
    margin-left: 11px;
}
.slider {
    position: relative;
    width: 82px;
    height: 4px;
    margin-left: 7px;
    border-radius: 2px;
    background-color: #dcdcdc;
}
.slider-thumb {
    position: absolute;
    left: 6px;
    top: -4px;
    width: 8px;
    height: 8px;
    border: 2px solid #ccc;
    border-radius: 50%;
    background-color: #fff;
}
.z-plus {
    margin-left: 7px;
}
.zoom-val {
    margin-left: 12px;
    margin-right: 11px;
    font: 13px "Liberation Sans", sans-serif;
    color: #222;
}
.z-full {
    margin-left: 21px;
}
.z-fit {
    margin-left: 11px;
}

/* Diagrama */
.t-title {
    font: bold 16.500px "Noto Sans CJK SC", sans-serif;
    text-anchor: middle;
    fill: #000;
}
.t-lab {
    font: 6.500px "Noto Sans CJK SC", sans-serif;
    text-anchor: middle;
    fill: #2c6f8f;
}
.t-node text {
    font: bold 9.500px "Noto Sans CJK SC", sans-serif;
    text-anchor: middle;
    fill: #555;
}
.t-dia {
    font: 7px "Noto Sans CJK SC", sans-serif;
    text-anchor: middle;
    fill: #111;
}
.t-dia.blue {
    fill: #2a7aa0;
}
.conn path {
    fill: none;
    stroke: #555;
    stroke-width: 1;
    stroke-dasharray: 6 2 2 2;
}
.node rect {
    fill: url(#nodeFill);
    stroke: #666;
    stroke-dasharray: 5 2;
}
.dash {
    stroke: #555;
    stroke-dasharray: 5 2;
}

/* Marca de agua */
.watermark {
    position: absolute;
    left: 900px;
    top: 590px;
    width: 281px;
    height: 134px;
    pointer-events: none;
    color: #fff;
    opacity: 0.62;
}
.watermark span {
    position: absolute;
    text-shadow: 0 0 2px rgba(120,120,120,0.6);
}
.wm-bai {
    left: 7px;
    top: 17px;
    font: bold 54px/60px "Liberation Sans", sans-serif;
}
.wm-paw {
    position: absolute;
    left: 74px;
    top: 3px;
}
.wm-du {
    left: 102px;
    top: 17px;
    font: bold 54px/60px "Liberation Sans", sans-serif;
}
.wm-cn {
    left: 155px;
    top: 28px;
    font: bold 30px/40px "Noto Sans CJK SC", sans-serif;
}
.wm-url {
    left: 7px;
    top: 72px;
    font: 28px/36px "Liberation Sans", sans-serif;
    letter-spacing: 0.2px;
}
```
